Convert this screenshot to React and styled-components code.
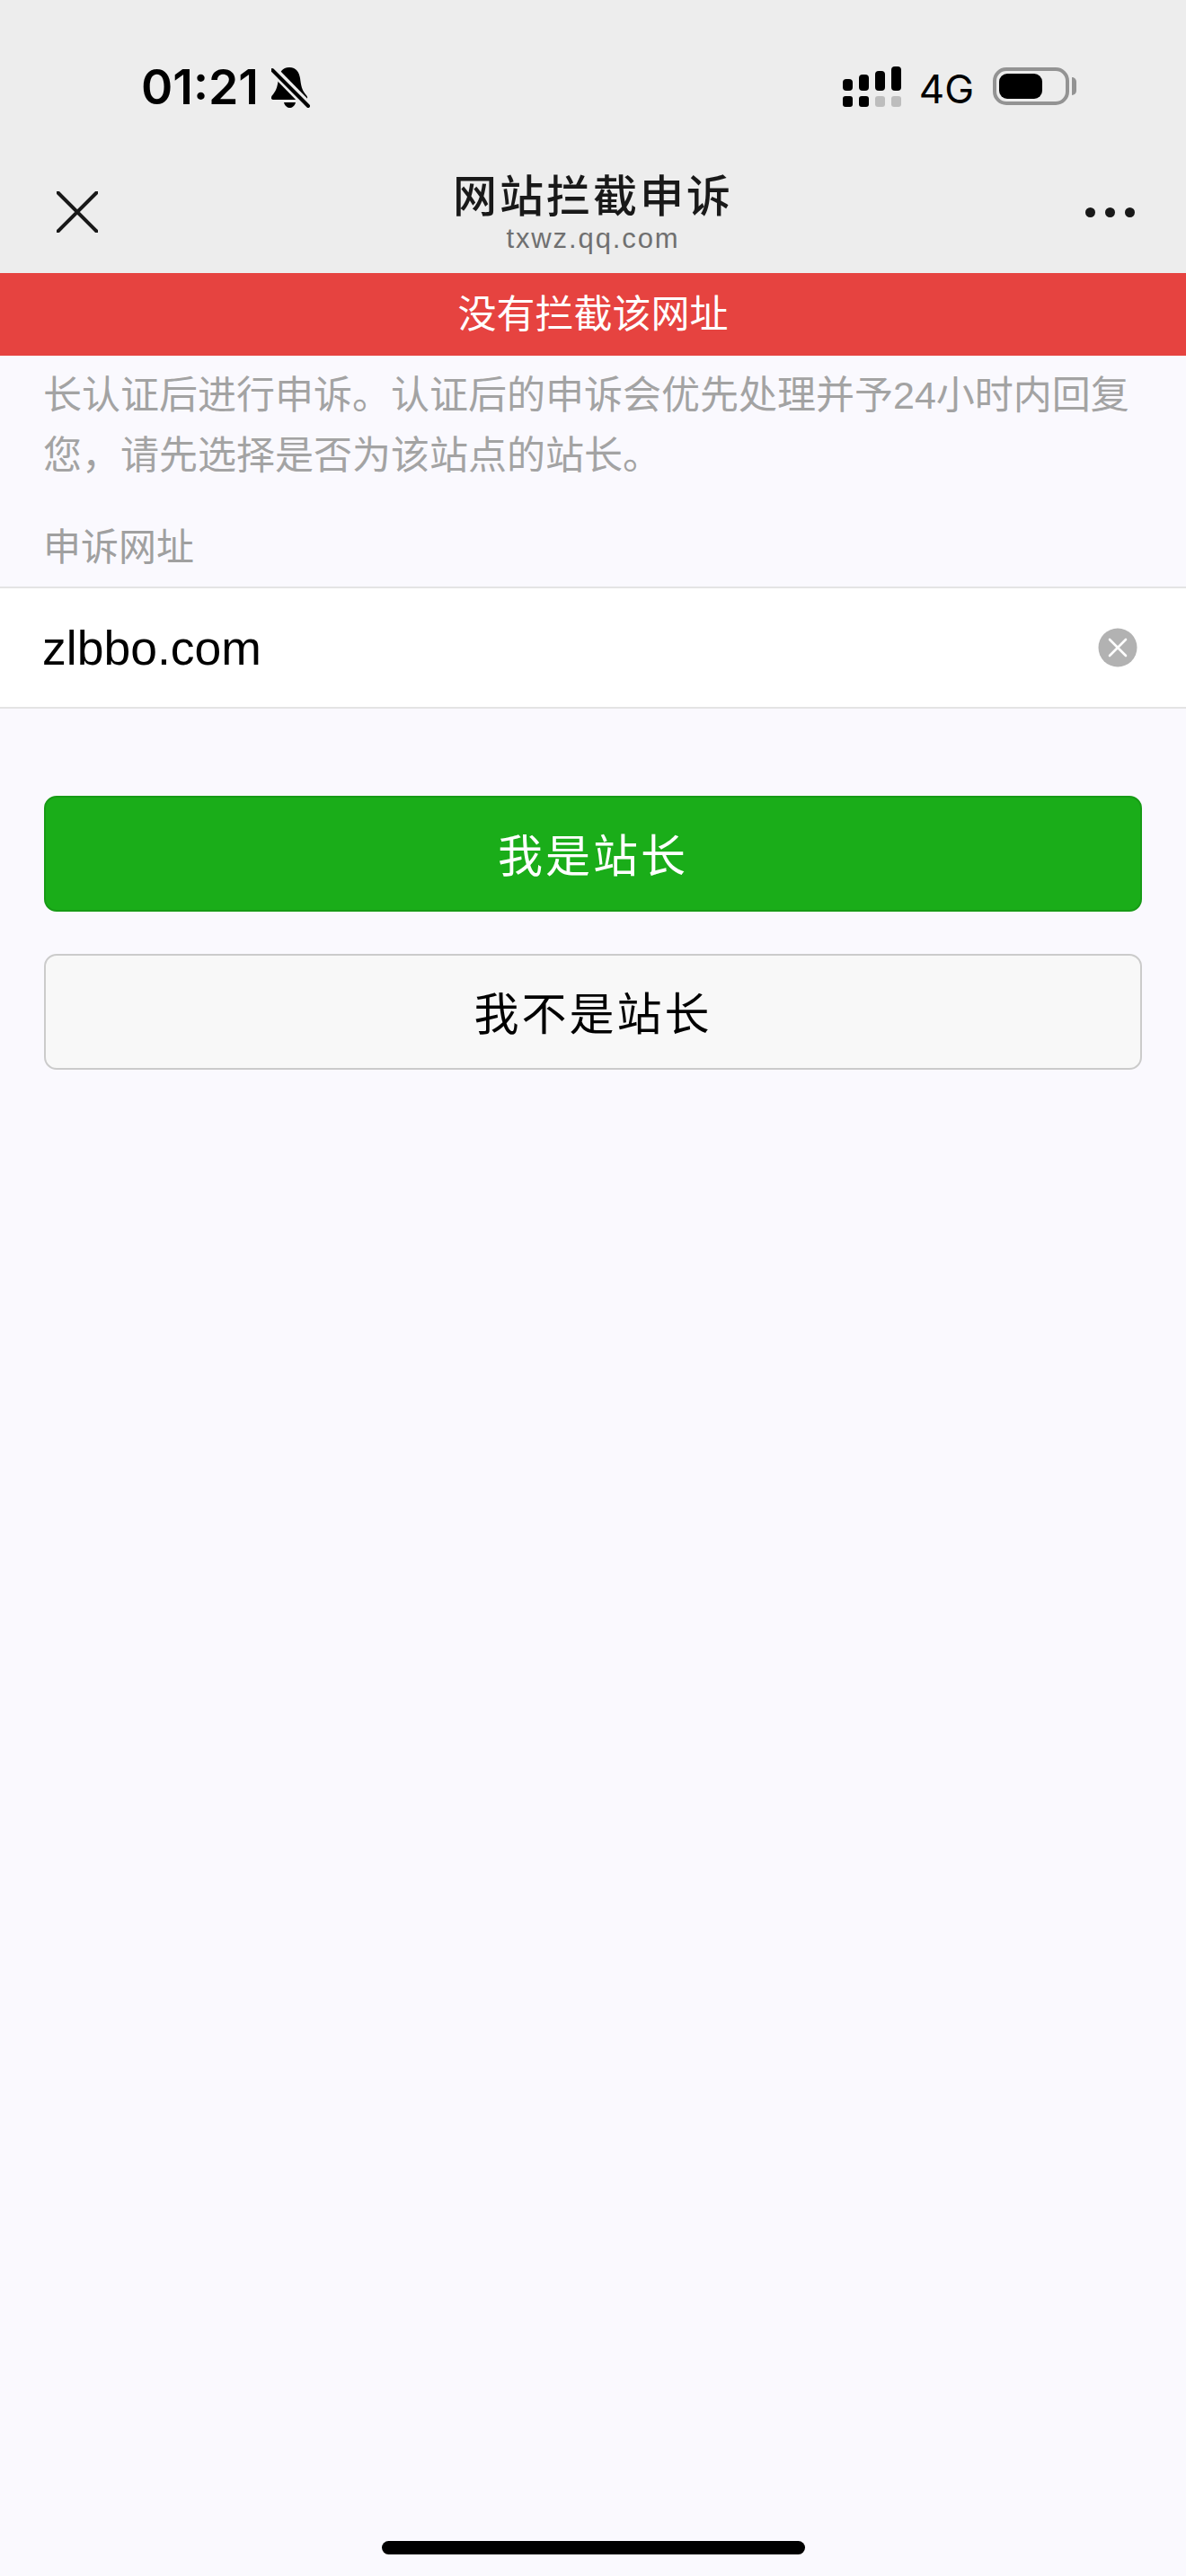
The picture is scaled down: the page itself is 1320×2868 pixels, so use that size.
import React from 'react'
import styled, {createGlobalStyle} from 'styled-components'

const GlobalStyle = createGlobalStyle`
  html, body {
    margin: 0;
    padding: 0;
    background: #faf9fe;
  }
  * {
    box-sizing: border-box;
  }
`

const cjk = `'Liberation Sans', 'Noto Sans CJK SC', sans-serif`

const signalBars = [
  {top: 13, bottomOn: true},
  {top: 18, bottomOn: true},
  {top: 22, bottomOn: false},
  {top: 27, bottomOn: false},
]

const BellOffIcon = () => (
  <BellSvg viewBox="0 0 43 46">
    <path
      d="M20 0C28 0 31 6 32 12C33 20 34 25 38 30C41 33 41 36 37 36H3C-1 36-1 33 2 30C6 25 7 20 8 12C9 6 12 0 20 0Z"
      fill="#000"
    />
    <path d="M14 39H27C26 43 23 45 20.5 45C18 45 15 43 14 39Z" fill="#000" />
    <path d="M1 2L42 44" stroke="#ededed" strokeWidth="10" />
    <path d="M1 3L41 43" stroke="#000" strokeWidth="4" strokeLinecap="round" />
  </BellSvg>
)

const CloseIcon = () => (
  <CloseSvg viewBox="0 0 46 46">
    <path
      d="M1.5 1.5L44.5 44.5M44.5 1.5L1.5 44.5"
      stroke="#191919"
      strokeWidth="4"
      strokeLinecap="round"
      fill="none"
    />
  </CloseSvg>
)

const App = () => {
  return (
    <Page>
      <GlobalStyle />
      <TopBar>
        <StatusBar>
          <TimeGroup>
            <Time>01:21</Time>
            <BellOffIcon />
          </TimeGroup>
          <StatusRight>
            <Signal>
              {signalBars.map(bar => (
                <SignalColumn key={bar.top}>
                  <SignalTop $height={bar.top} />
                  <SignalDot $on={bar.bottomOn} />
                </SignalColumn>
              ))}
            </Signal>
            <Network>4G</Network>
            <BatteryWrap>
              <Battery>
                <BatteryFill />
              </Battery>
              <BatteryNub />
            </BatteryWrap>
          </StatusRight>
        </StatusBar>
        <NavBar>
          <NavLeft>
            <CloseIcon />
          </NavLeft>
          <NavTitle>
            <Title>网站拦截申诉</Title>
            <Subtitle>txwz.qq.com</Subtitle>
          </NavTitle>
          <NavRight>
            <MoreDot />
            <MoreDot />
            <MoreDot />
          </NavRight>
        </NavBar>
      </TopBar>
      <Banner>没有拦截该网址</Banner>
      <Intro>
        长认证后进行申诉。认证后的申诉会优先处理并予24小时内回复您，请先选择是否为该站点的站长。
      </Intro>
      <FieldLabel>申诉网址</FieldLabel>
      <FieldRow>
        <FieldValue>zlbbo.com</FieldValue>
        <ClearButton>
          <svg viewBox="0 0 44 44" width="44" height="44">
            <circle cx="22" cy="22" r="21.5" fill="#b2b2b2" />
            <path
              d="M13 13L31 31M31 13L13 31"
              stroke="#fff"
              strokeWidth="2.6"
              strokeLinecap="round"
            />
          </svg>
        </ClearButton>
      </FieldRow>
      <Actions>
        <ActionButton $primary>我是站长</ActionButton>
        <ActionButton>我不是站长</ActionButton>
      </Actions>
      <HomeIndicator />
    </Page>
  )
}

const Page = styled.div`
  display: flex;
  flex-direction: column;
  width: 1320px;
  height: 2868px;
  overflow: hidden;
  background: #faf9fe;
  font-family: ${cjk};
`

const TopBar = styled.header`
  display: flex;
  flex-direction: column;
  height: 304px;
  background: #ededed;
`

const StatusBar = styled.div`
  display: flex;
  justify-content: space-between;
  align-items: flex-start;
  height: 185px;
  padding: 74px 122px 0 157px;
`

const TimeGroup = styled.div`
  display: flex;
  align-items: flex-start;
  gap: 14px;
`

const Time = styled.span`
  font-family: Inter, 'Liberation Sans', sans-serif;
  font-size: 53.5px;
  font-weight: 600;
  line-height: 46px;
  color: #000;
`

const BellSvg = styled.svg`
  width: 43px;
  height: 46px;
  margin-top: 1px;
`

const StatusRight = styled.div`
  display: flex;
  align-items: flex-start;
  gap: 22px;
`

const Signal = styled.div`
  display: flex;
  gap: 7px;
  margin-right: -2px;
`

const SignalColumn = styled.div`
  display: flex;
  flex-direction: column;
  justify-content: flex-end;
  gap: 6px;
  width: 11px;
  height: 45px;
`

const SignalTop = styled.span`
  height: ${props => props.$height}px;
  border-radius: 4px;
  background: #000;
`

const SignalDot = styled.span`
  height: 12px;
  border-radius: 3px;
  background: ${props => (props.$on ? '#000' : '#bdbdbd')};
`

const Network = styled.span`
  font-family: Inter, 'Liberation Sans', sans-serif;
  font-size: 44px;
  line-height: 48px;
  margin-top: 1px;
  margin-right: -1px;
  color: #000;
`

const BatteryWrap = styled.div`
  display: flex;
  align-items: center;
  gap: 3px;
  margin-top: 1px;
`

const Battery = styled.div`
  display: flex;
  width: 85px;
  height: 42px;
  padding: 3px;
  border: 4px solid #939393;
  border-radius: 15px;
`

const BatteryFill = styled.div`
  width: 48px;
  height: 100%;
  border-radius: 9px;
  background: #000;
`

const BatteryNub = styled.div`
  width: 5px;
  height: 20px;
  border-radius: 0 6px 6px 0;
  background: #939393;
`

const NavBar = styled.div`
  display: grid;
  grid-template-columns: 1fr auto 1fr;
  align-items: start;
  flex: 1;
`

const NavLeft = styled.div`
  display: flex;
  padding: 28px 0 0 63px;
`

const CloseSvg = styled.svg`
  width: 46px;
  height: 46px;
`

const NavTitle = styled.div`
  display: flex;
  flex-direction: column;
  align-items: center;
  padding-top: 4px;
`

const Title = styled.h1`
  margin: 0;
  font-size: 49px;
  font-weight: 500;
  line-height: 60px;
  letter-spacing: 3px;
  color: #191919;
`

const Subtitle = styled.span`
  font-family: 'Liberation Sans', sans-serif;
  font-size: 31px;
  line-height: 34px;
  letter-spacing: 1.9px;
  color: #707070;
`

const NavRight = styled.div`
  display: flex;
  justify-content: flex-end;
  gap: 11px;
  padding: 46px 57px 0 0;
`

const MoreDot = styled.span`
  width: 11px;
  height: 11px;
  border-radius: 50%;
  background: #191919;
`

const Banner = styled.div`
  height: 92px;
  background: #e64340;
  font-size: 43px;
  line-height: 92px;
  text-align: center;
  color: #fff;
`

const Intro = styled.p`
  margin: 11px 0 0;
  padding: 0 48px;
  font-size: 43px;
  line-height: 67px;
  color: #a3a3a3;
`

const FieldLabel = styled.div`
  margin-top: 39px;
  padding: 0 48px;
  font-size: 42px;
  line-height: 60px;
  color: #a0a0a0;
`

const FieldRow = styled.div`
  display: flex;
  justify-content: space-between;
  align-items: center;
  height: 136px;
  margin-top: 13px;
  padding: 0 54px 0 47px;
  border-top: 2px solid #e4e4e4;
  border-bottom: 2px solid #e4e4e4;
  background: #fff;
`

const FieldValue = styled.span`
  font-family: 'Liberation Sans', sans-serif;
  font-size: 53.5px;
  color: #000;
`

const ClearButton = styled.span`
  display: flex;
`

const Actions = styled.div`
  display: flex;
  flex-direction: column;
  gap: 47px;
  margin-top: 97px;
  padding: 0 49px;
`

const ActionButton = styled.button`
  height: 129px;
  padding: 0 0 4px;
  border: 2px solid ${props => (props.$primary ? '#179b16' : '#cbcbcb')};
  border-radius: 14px;
  background: ${props => (props.$primary ? '#1aad19' : '#f8f8f8')};
  font-family: ${cjk};
  font-size: 50px;
  letter-spacing: 3px;
  color: ${props => (props.$primary ? '#fff' : '#000')};
`

const HomeIndicator = styled.div`
  align-self: center;
  width: 471px;
  height: 15px;
  margin-top: auto;
  margin-bottom: 24px;
  border-radius: 8px;
  background: #000;
`

export default App
